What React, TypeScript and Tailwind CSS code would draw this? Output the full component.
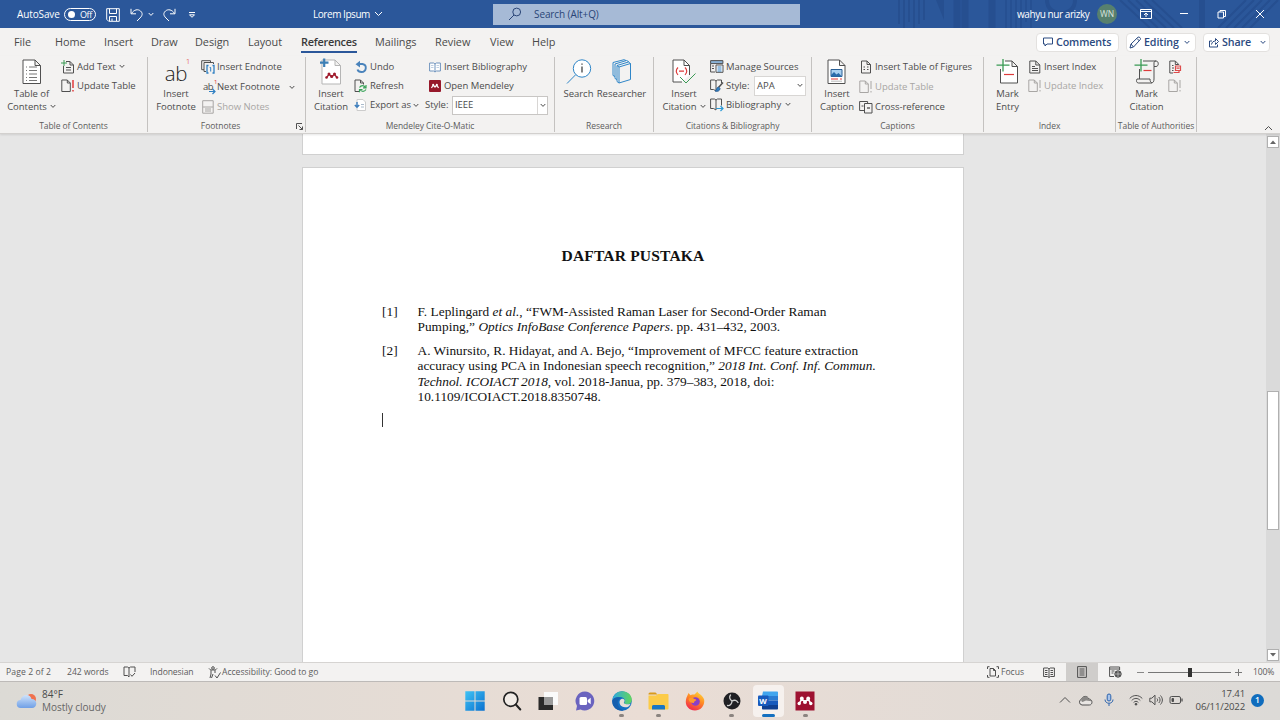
import type { ReactNode } from "react";
import { clsx } from "clsx";

type IconProps = { w: number; h: number; className?: string; children: ReactNode };

function Icon({ w, h, className, children }: IconProps) {
  return (
    <svg
      width={w}
      height={h}
      viewBox={`0 0 ${w} ${h}`}
      fill="none"
      stroke="#505050"
      strokeWidth="1"
      className={clsx("shrink-0", className)}
    >
      {children}
    </svg>
  );
}

function Chevron({ className }: { className?: string }) {
  return (
    <svg width="6" height="5" viewBox="0 0 6 5" fill="none" stroke="currentColor" className={clsx("shrink-0", className)}>
      <path d="M0.7 1 3 3.4 5.3 1" />
    </svg>
  );
}

/* ---------- title bar ---------- */

function TitleBar() {
  return (
    <header className="relative flex h-7 shrink-0 items-center overflow-hidden bg-[#2b579a] text-white">
      <svg className="absolute top-0 right-0" width="400" height="28" viewBox="0 0 400 28" fill="none" stroke="#264f90">
        <path d="M19 0v24M24 0v28M29 0v22M34 0v28M39 0v24M44 0v20" strokeWidth="2" />
        <path d="M56 0h8v20z" fill="#264f90" stroke="none" />
        <path d="M77 0v28M85 0v28M112 0v28" strokeWidth="7" />
        <path d="M126 0v28M131 0v28M136 0v28M141 0v28M146 0v22M151 0v28" strokeWidth="1.5" />
        <path d="M167 0c0 18 28 18 28 0" strokeWidth="4" />
        <path d="M240 0l30 28M248 0l30 28M256 0l30 28M264 0l30 28M272 0l30 28" strokeWidth="2" />
        <path d="M322 0v28" strokeWidth="6" />
        <path d="M366 0l-28 28M374 0l-28 28M382 0l-28 28M390 0l-28 28M398 0l-28 28" strokeWidth="2" />
      </svg>
      <div className="relative flex w-full items-center">
        <span className="ml-[17px] w-[47px] text-[10px] tracking-[-0.12px]">AutoSave</span>
        <span className="flex h-[13px] w-8 items-center rounded-full border border-white pl-[3px]">
          <span className="size-[7px] rounded-full bg-white" />
          <span className="ml-[5px] text-[9px] leading-none tracking-[-0.4px]">Off</span>
        </span>
        <Icon w={14} h={14} className="mt-px ml-[10px] stroke-white">
          <path d="M.7.7h12.600v12.600H2.700l-2-2zM3.500.7v4.800h7V.7M3.500 13V8.500h7V13M6 13v-2.500" />
        </Icon>
        <Icon w={14} h={14} className="mt-px ml-[10px] stroke-white">
          <path d="M1 .8v5h5M1.500 5.500C4 1.500 8 .8 10.500 3c2.500 2.300 2 4.500-.5 7L7 13" />
        </Icon>
        <Chevron className="ml-1" />
        <Icon w={14} h={14} className="mt-px ml-2 stroke-white">
          <path d="M13 .8v5H8M12.500 5.500C10 1.500 6 .8 3.500 3 1 5.300 1.500 7.500 4 10l3 3" />
        </Icon>
        <Icon w={8} h={8} className="mt-px ml-3 stroke-white">
          <path d="M1 1.500h6M1.500 3.800 4 6.300l2.500-2.500z" />
        </Icon>
        <span className="mt-px ml-[117px] w-[60px] text-[10px] tracking-[-0.45px] whitespace-nowrap">Lorem Ipsum</span>
        <Icon w={9} h={6} className="ml-px stroke-white">
          <path d="M1 1l3.500 3.500L8 1" />
        </Icon>
        <div className="ml-[110px] flex h-[21px] w-[307px] items-center bg-[#a6bad6] text-[#2a4577]">
          <Icon w={14} h={14} className="ml-[15px] stroke-[#2a4577]">
            <circle cx="8.700" cy="5" r="3.900" />
            <path d="M6 8 1 13" />
          </Icon>
          <span className="ml-3 text-[10px] tracking-[-0.1px] whitespace-nowrap">Search (Alt+Q)</span>
        </div>
        <span className="ml-[217px] w-[80px] text-[10px] tracking-[-0.43px] whitespace-nowrap">
          wahyu nur arizky
        </span>
        <span className="flex size-5 items-center justify-center rounded-full bg-[#57806e] text-[8.500px] text-[#d8e4de]">WN</span>
        <Icon w={12} h={10} className="ml-[23px] stroke-white">
          <path d="M.5.5h11v9H.5zM.5 2.500h11M6 8V4.200M4 6l2-2 2 2" />
        </Icon>
        <Icon w={10} h={10} className="ml-[27px] stroke-white">
          <path d="M1 4.500h8" />
        </Icon>
        <Icon w={10} h={10} className="ml-7 stroke-white">
          <path d="M1 3h5.500v6H1zM3 3V1.500h5.500V7.500H6.500" strokeLinejoin="round" />
        </Icon>
        <Icon w={10} h={10} className="ml-7 stroke-white">
          <path d="M1 1l8 8M9 1 1 9" />
        </Icon>
      </div>
    </header>
  );
}

/* ---------- tabs ---------- */

const tabs = [
  { label: "File", cls: "w-[41px]" },
  { label: "Home", cls: "w-[49px]" },
  { label: "Insert", cls: "w-[47px]" },
  { label: "Draw", cls: "w-[44px]" },
  { label: "Design", cls: "w-[53px]" },
  { label: "Layout", cls: "w-[53px]" },
  { label: "References", cls: "w-[74px]", active: true },
  { label: "Mailings", cls: "w-[60px]" },
  { label: "Review", cls: "w-[55px]" },
  { label: "View", cls: "w-[42px]" },
  { label: "Help", cls: "w-[40px]" },
];

function Tabs() {
  return (
    <nav className="flex h-7 shrink-0 items-center bg-[#f3f2f1] pl-[14px] text-[10.900px] tracking-[-0.05px] text-[#4a4a4a]">
      {tabs.map((tab) => (
        <div key={tab.label} className={clsx("shrink-0", tab.cls)}>
          <span
            className={clsx(
              "relative inline-block leading-5",
              tab.active && "font-semibold tracking-[-0.25px] text-[#3a3a3a]"
            )}
          >
            {tab.label}
            {tab.active && <span className="absolute inset-x-0 -bottom-px h-0.5 bg-[#2b579a]" />}
          </span>
        </div>
      ))}
      <div className="ml-auto flex items-center pr-[10px] text-[10.700px] font-semibold tracking-[-0.1px] text-[#2b4a80]">
        <button className="flex h-[19px] w-[83px] items-center rounded-sm border border-[#e3e1df] bg-white pl-1.5">
          <Icon w={10} h={10} className="stroke-[#2b4a80]">
            <path d="M.5 1h9v6H4L2 9V7H.5z" />
          </Icon>
          <span className="ml-[3px]">Comments</span>
        </button>
        <button className="ml-[7px] flex h-[19px] w-[70px] items-center rounded-sm border border-[#e3e1df] bg-white pl-0.5">
          <Icon w={13} h={13} className="stroke-[#2b4a80]">
            <path d="M1 12l1-4L9 1.200c1-.8 3.300 1 2.300 2.300L4.500 11zM8 2.500 10.500 5M2 8l2.500 3" />
          </Icon>
          <span className="ml-[2px]">Editing</span>
          <Chevron className="ml-[5px]" />
        </button>
        <button className="ml-[7px] flex h-[19px] w-[67px] items-center rounded-sm border border-[#e3e1df] bg-white pl-[5px]">
          <Icon w={10} h={11} className="stroke-[#2b4a80]">
            <path d="M3 4H.5v6h8V7.500M2.500 7.500C3 5 4.500 4 6.500 4V1.500l3 3-3 3V5.500" />
          </Icon>
          <span className="ml-[3px]">Share</span>
          <Chevron className="ml-[9px]" />
        </button>
      </div>
    </nav>
  );
}

/* ---------- ribbon icons ---------- */

const icons = {
  toc: (
    <Icon w={20} h={26}>
      <path d="M1 1h12l5.500 5.500V24.500H1zM13 1v5.500h5.500" fill="#fff" />
      <path d="M4 8h1M7 8h8M4 11.500h1M7 11.500h8M4 15h1M7 15h8M4 18.500h1M7 18.500h8M4 21.500h1M7 21.500h8" stroke="#777" />
    </Icon>
  ),
  addText: (
    <Icon w={14} h={14}>
      <path d="M5 1.500h4l3.500 3.500v8h-10V6M9 1.500V5h3.500M5 7.500h5M5 10h5" />
      <path d="M3 0v6M0 3h6" stroke="#3a9a55" />
    </Icon>
  ),
  updateTable: (
    <Icon w={14} h={14}>
      <path d="M.8 1h5.500l3 3v8.500H.8zM6.300 1v3h3" />
      <path d="M12 1v8M12 11v1.500" stroke="#e03030" strokeWidth="1.400" />
    </Icon>
  ),
  updateOff: (
    <Icon w={14} h={14} className="stroke-[#a8a6a4]">
      <path d="M.8 1h5.500l3 3v8.500H.8zM6.300 1v3h3M12 1v8M12 11v1.500" />
    </Icon>
  ),
  endnote: (
    <Icon w={14} h={14}>
      <path d="M9.500 2.500V.7H.7v9H3M5 11.500H3v-9h9.500V4" />
      <path d="M7.500 5.500H6v7.500h1.500M11.500 5.500H13v7.500h-1.500" stroke="#2e7fc2" strokeWidth="1.300" />
      <path d="M8.700 7.500h1v4" stroke="#2e7fc2" />
    </Icon>
  ),
  notes: (
    <Icon w={12} h={14} className="stroke-[#a8a6a4]">
      <path d="M.7.7h10.500v12.500H.7zM.7 7h10.500M3 9h6M3 11h6" />
    </Icon>
  ),
  mendeleyInsert: (
    <Icon w={24} h={28}>
      <path d="M3 2h13l5.500 5.500V26H3zM16 2v5.500h5.500" fill="#fff" stroke="#b5b5b5" />
      <path d="M5.200 .5v8.500M1 4.700h8.500" stroke="#3d7fb5" strokeWidth="2.200" />
      <g fill="#a01a2c" stroke="none">
        <circle cx="10" cy="16" r="1.500" />
        <circle cx="15.500" cy="16" r="1.500" />
        <circle cx="7.500" cy="19.500" r="1.300" />
        <circle cx="12.700" cy="18.500" r="1.600" />
        <circle cx="18" cy="19.500" r="1.300" />
      </g>
      <path d="M7.500 19.500 10 16.500l2.700 2 2.800-2 2.500 3" stroke="#a01a2c" strokeWidth="1.300" />
    </Icon>
  ),
  undo: (
    <Icon w={14} h={14}>
      <path d="M4 4h4.500c5 1 4 8-1 8-2 0-3.500-.8-4-2.500" stroke="#4a83bb" strokeWidth="1.900" />
      <path d="M1.500 4.200 6 .8v6.700z" fill="#4a83bb" stroke="none" />
    </Icon>
  ),
  refresh: (
    <Icon w={14} h={14}>
      <path d="M5 12.500H1V1h5.500l3 3v1.500M6.500 1v3h3" />
      <path d="M5.500 8.500c1.500-2.500 4.500-2.500 6 0M12 6v2.800H9M12 10.500c-1.500 2.500-4.500 2.500-6 0M5.500 13.200v-2.700h3" stroke="#3aa35a" strokeWidth="1.200" />
    </Icon>
  ),
  exportAs: (
    <Icon w={14} h={14}>
      <path d="M3 1.500h6l2.500 2.500v8.500H3z" fill="#fff" stroke="#ccc" />
      <path d="M3 4v5M.8 7 3 9.300 5.200 7" stroke="#3b7dbd" strokeWidth="1.400" />
      <path d="M7 9h3M7 6.500h3" stroke="#abc" />
    </Icon>
  ),
  biblio: (
    <Icon w={12} h={12} className="stroke-[#6f93bd]">
      <path d="M.6 2h4L6 3l1.400-1h4v8h-4L6 11l-1.400-1h-4zM6 3v8" fill="#fff" />
      <path d="M2 4.500h2.500M2 6.500h2.500M7.500 4.500H10M7.500 6.500H10" stroke="#c0d0e2" />
    </Icon>
  ),
  openMendeley: (
    <Icon w={12} h={12}>
      <rect width="12" height="12" rx="1" fill="#97192b" stroke="none" />
      <path d="M2.500 8 4.200 5 6 7l1.800-2L9.500 8" stroke="#fff" strokeWidth="1.200" />
      <circle cx="4.200" cy="4.700" r="1" fill="#fff" stroke="none" />
      <circle cx="7.800" cy="4.700" r="1" fill="#fff" stroke="none" />
    </Icon>
  ),
  search: (
    <Icon w={26} h={26} className="stroke-[#2f86c8]">
      <circle cx="16" cy="9.500" r="8.700" fill="#fff" />
      <path d="M9.700 15.700 1 24.500" />
      <path d="M16 7.500v6M16 4.500v1.300" stroke="#333" strokeWidth="1.200" />
    </Icon>
  ),
  researcher: (
    <Icon w={22} h={26} className="stroke-[#2f86c8]">
      <path d="M8 8v16l11.500-3.500V4.500zM8 24l-2-1.500V6.500L17.500 3l2 1.500M6 6.500 8 8M6 20.500l-2-1V5l11.500-3.500 2 1V3M4 17.500l-2-1V3.500L13 .7l2 .8" />
    </Icon>
  ),
  citation: (
    <Icon w={24} h={28}>
      <path d="M17.500 18v-9.500L12 3H1v22h9M12 3v5.500h5.500" fill="#fff" />
      <path d="M6 10.500c-2.300 2.300-2.300 5 0 7.300M13 10.500c2.300 2.300 2.300 5 0 7.300M7 14.200h5" stroke="#dd3b3b" strokeWidth="1.200" />
      <path d="M8 20l6 6 9.500-9.500" stroke="#3a9a55" />
    </Icon>
  ),
  manage: (
    <Icon w={14} h={13}>
      <path d="M.6.6h12.300v3H.6z" fill="#8bb2d6" />
      <path d="M.6 3.500v8.500H5M2 6h2M2 8.500h2" />
      <path d="M6 5h7v7.300H6z" fill="#fff" />
      <path d="M7.500 7h4M7.500 9h4M7.500 11h4" stroke="#2e7fc2" />
    </Icon>
  ),
  styleBook: (
    <Icon w={14} h={14}>
      <path d="M6 2 4.500 1H.6v9.500h3L6 12V2l1.500-1h4v3" />
      <path d="M13 3.500 8.500 8.500" strokeWidth="1.500" />
      <path d="M8.500 8c-2 0-1.500 3-3.500 4 3 1 5-.5 5-2.500z" fill="#2e7fc2" stroke="#2e5f92" />
    </Icon>
  ),
  biblioArrow: (
    <Icon w={14} h={14}>
      <path d="M6 2 4.500 1H.6v9.500h3L6 12V2l1.500-1h4v6.500" />
      <path d="M6 10.500h7M10.500 8l2.500 2.500-2.500 2.500" stroke="#2e9bd6" strokeWidth="1.200" />
    </Icon>
  ),
  caption: (
    <Icon w={20} h={26}>
      <path d="M1 1h11.500l5.500 5.500V24.500H1zM12.500 1v5.500H18" fill="#fff" />
      <path d="M4 10.500h11v7H4z" fill="#a9d0f0" stroke="#2b5f94" />
      <path d="M4 16l3-3 2.500 2.500 2-1.500 3.500 3.500H4z" fill="#2b6cab" stroke="none" />
      <path d="M4 20h7M13 20h2" stroke="#dd3b3b" />
      <path d="M4 22.200h11" stroke="#bbb" />
    </Icon>
  ),
  figures: (
    <Icon w={14} h={14}>
      <path d="M2.500 1h5.500l3.500 3.500V13h-9zM8 1v3.500h3.500" />
      <path d="M4.500 7h1.500M8 7h1.500M4.500 9.500h1.500M8 9.500h1.500" />
    </Icon>
  ),
  crossRef: (
    <Icon w={14} h={14}>
      <path d="M5 10.500H.6V1.500h8v2M2.500 6h2" />
      <path d="M5.500 3.500h7.500v9.500H5.500z" fill="#f3f2f1" />
      <path d="M8 8h3" stroke="#555" strokeWidth="1.400" />
    </Icon>
  ),
  markEntry: (
    <Icon w={24} h={28}>
      <path d="M9 3h7l5.500 5.500V25H4.500V11M16 3v5.500h5.500" fill="#fff" />
      <path d="M7 1v12.500M.5 7.200h13" stroke="#3a9a55" strokeWidth="1.300" />
      <path d="M8 16.500h10" stroke="#dd3b3b" strokeWidth="1.200" />
    </Icon>
  ),
  insertIndex: (
    <Icon w={12} h={14}>
      <path d="M.8 1h6l4 4v8H.8zM6.800 1v4h4M3 6.500h3M3 8.500h6M3 10.500h6" />
    </Icon>
  ),
  markCitation: (
    <Icon w={26} h={28}>
      <path d="M9 3h13c3 0 3 5.500 0 5.500h-2V21c0 5-4 5-4 0H3c-1 1.800-.5 4 1.500 4H18M5.500 11v10M20 8.500V5c0-1 .5-2 2-2" fill="none" />
      <path d="M7 1v12.500M.5 7.200h13" stroke="#3a9a55" strokeWidth="1.300" />
      <path d="M9.500 12.500h8" stroke="#dd3b3b" strokeWidth="1.200" />
    </Icon>
  ),
  authorities: (
    <Icon w={13} h={14}>
      <path d="M4 13H.8V1h5.500l3.500 3.500M6.300 1v3.500h3.500M3 5.500h1.500M3 8h2M3 10.500h1.500" />
      <path d="M6.500 6h5v4.500h-5zM4.500 12.500h5.500v-2M7.500 8.200h3" stroke="#dd4b4b" strokeWidth="1.200" />
    </Icon>
  ),
};

/* ---------- ribbon ---------- */

function Group({ label, cls, labelCls, children }: { label: string; cls: string; labelCls?: string; children: ReactNode }) {
  return (
    <section className={clsx("my-px flex shrink-0 flex-col border-r border-[#c4c2c0]", cls)}>
      <div className="flex h-[64px] items-start">{children}</div>
      <div className={clsx("text-center text-[8.500px] leading-[12px] tracking-[-0.06px] whitespace-nowrap text-[#5c5c5c]", labelCls)}>
        {label}
      </div>
    </section>
  );
}

function Big({ icon, cls, lines, chevron }: { icon: ReactNode; cls: string; lines: string[]; chevron?: boolean }) {
  return (
    <div className={clsx("flex shrink-0 flex-col items-center", cls)}>
      <div className="flex h-[30px] items-start justify-center">{icon}</div>
      {lines.map((line, i) => (
        <span key={line} className="flex items-center leading-[13px] whitespace-nowrap">
          {line}
          {chevron && i === lines.length - 1 && <Chevron className="ml-[3px]" />}
        </span>
      ))}
    </div>
  );
}

function Row({ icon, label, tall, off, chevron, gap = "ml-0.5" }: { icon: ReactNode; label?: string; tall?: boolean; off?: boolean; chevron?: string; gap?: string }) {
  return (
    <div className={clsx("flex items-center whitespace-nowrap", tall ? "h-5" : "h-[19.300px]", off && "text-[#a8a6a4]")}>
      <span className="flex w-[14px] justify-center">{icon}</span>
      {label && <span className={gap}>{label}</span>}
      {chevron && <Chevron className={chevron} />}
    </div>
  );
}

function AbIcon({ small }: { small?: boolean }) {
  if (small) {
    return (
      <span className="relative text-[9.500px] leading-none tracking-[-0.5px]">
        ab
        <Icon w={7} h={7} className="absolute top-1.5 left-[6px] stroke-[#2e7fc2]">
          <path d="M0 3.500h6M3.500 1 6 3.500 3.500 6" strokeWidth="1.200" />
        </Icon>
        <span className="absolute -top-[3px] left-[11px] text-[6px] text-[#e03030]">1</span>
      </span>
    );
  }
  return (
    <span className="relative mt-[5px] text-[20.500px] leading-[22px] font-light tracking-[-0.4px] text-[#222]">
      ab
      <span className="absolute -top-[7px] left-[21px] text-[8px] leading-[12px] text-[#e03030]">1</span>
    </span>
  );
}

function Ribbon() {
  return (
    <div className="relative z-10 flex h-[78px] shrink-0 border-b border-[#d2d0ce] bg-[#f3f2f1] text-[9.500px] tracking-[-0.04px] text-[#4c4c4c] shadow-[0_1px_2px_rgba(0,0,0,0.1)]">
      <Group label="Table of Contents" cls="w-[148px]">
        <Big icon={<span className="mt-0.5">{icons.toc}</span>} cls="ml-[6px] w-[51px]" lines={["Table of", "Contents"]} chevron />
        <div className="ml-[4px]">
          <Row icon={icons.addText} label="Add Text" chevron="ml-[3px]" />
          <Row icon={icons.updateTable} label="Update Table" />
        </div>
      </Group>

      <Group label="Footnotes" cls="w-[158px]" labelCls="relative pr-3">
        <Big icon={<AbIcon />} cls="ml-[6px] w-[44px]" lines={["Insert", "Footnote"]} />
        <div className="ml-[3px]">
          <Row tall icon={icons.endnote} label="Insert Endnote" />
          <Row tall icon={<AbIcon small />} label="Next Footnote" chevron="ml-[9px]" />
          <Row tall off icon={icons.notes} label="Show Notes" />
        </div>
        <Icon w={7} h={7} className="absolute top-[67px] left-[296px]">
          <path d="M6 .5H.5V6M2.500 2.500l4 4M6.500 3.500v3h-3" />
        </Icon>
      </Group>

      <Group label="Mendeley Cite-O-Matic" cls="w-[249px]">
        <Big icon={<span className="mt-px">{icons.mendeleyInsert}</span>} cls="ml-[7px] w-[36px]" lines={["Insert", "Citation"]} />
        <div className="ml-[5px] w-[73px]">
          <Row icon={icons.undo} label="Undo" />
          <Row icon={icons.refresh} label="Refresh" />
          <Row icon={icons.exportAs} label="Export as" chevron="ml-[2px]" />
        </div>
        <div className="pl-px">
          <Row icon={icons.biblio} label="Insert Bibliography" />
          <Row icon={icons.openMendeley} label="Open Mendeley" />
          <div className="-ml-[3px] flex h-[19px] items-center">
            <span className="w-[27px]">Style:</span>
            <div className="flex h-[19px] w-[96px] items-center border border-[#c8c6c4] bg-white pl-0.5">
              <span className="flex-1">IEEE</span>
              <span className="flex h-full w-[10px] items-center justify-center border-l border-[#d8d6d4]">
                <Chevron />
              </span>
            </div>
          </div>
        </div>
      </Group>

      <Group label="Research" cls="w-[99px]">
        <Big icon={<span className="mt-0.5">{icons.search}</span>} cls="ml-[8px] w-[31px]" lines={["Search"]} />
        <Big icon={<span className="mt-0.5">{icons.researcher}</span>} cls="ml-[2px] w-[51px]" lines={["Researcher"]} />
      </Group>

      <Group label="Citations & Bibliography" cls="w-[158px]">
        <Big icon={icons.citation} cls="ml-[7px] w-[46px]" lines={["Insert", "Citation"]} chevron />
        <div className="ml-[3px]">
          <Row icon={icons.manage} label="Manage Sources" />
          <div className="flex h-[19px] items-center">
            {icons.styleBook}
            <span className="ml-0.5 w-[28px]">Style:</span>
            <div className="flex h-5 w-[52px] items-center justify-between border border-[#d8d6d4] bg-white px-0.5">
              <span>APA</span>
              <Chevron />
            </div>
          </div>
          <Row icon={icons.biblioArrow} label="Bibliography" chevron="ml-[4px]" />
        </div>
      </Group>

      <Group label="Captions" cls="w-[172px]">
        <Big icon={<span className="mt-0.5">{icons.caption}</span>} cls="ml-[6px] w-[38px]" lines={["Insert", "Caption"]} />
        <div className="ml-[3px]">
          <Row tall icon={icons.figures} label="Insert Table of Figures" />
          <Row tall off icon={icons.updateOff} label="Update Table" />
          <Row tall icon={icons.crossRef} label="Cross-reference" />
        </div>
      </Group>

      <Group label="Index" cls="w-[132px]">
        <Big icon={<span className="mt-px">{icons.markEntry}</span>} cls="ml-[6px] w-[35px]" lines={["Mark", "Entry"]} />
        <div className="ml-[3px]">
          <Row icon={icons.insertIndex} label="Insert Index" />
          <Row off icon={icons.updateOff} label="Update Index" />
        </div>
      </Group>

      <Group label="Table of Authorities" cls="w-[81px]">
        <Big icon={<span className="mt-px">{icons.markCitation}</span>} cls="ml-[12px] w-[37px]" lines={["Mark", "Citation"]} />
        <div className="ml-[3px]">
          <Row icon={icons.authorities} />
          <Row icon={icons.updateOff} />
        </div>
      </Group>

      <Icon w={9} h={6} className="mt-auto mr-[7px] mb-[2px] ml-auto">
        <path d="M1 5l3.500-3.500L8 5" />
      </Icon>
    </div>
  );
}

/* ---------- document ---------- */

function Reference({ n, children }: { n: number; children: ReactNode }) {
  return (
    <div className="mb-[8.500px] flex">
      <span className="w-[35.500px] shrink-0">[{n}]</span>
      <p className="whitespace-nowrap">{children}</p>
    </div>
  );
}

function ScrollButton({ up }: { up?: boolean }) {
  return (
    <span className="flex h-3 w-3 items-center justify-center border border-[#b0b0b0] bg-white">
      <svg width="6" height="4" viewBox="0 0 6 4" fill="#666">
        <path d={up ? "M0 4 3 0.500 6 4z" : "M0 0 3 3.500 6 0z"} />
      </svg>
    </span>
  );
}

function DocumentArea() {
  return (
    <main className="flex h-[528px] shrink-0 bg-[#e6e6e6]">
      <div className="flex min-w-0 flex-1 flex-col pl-[302px]">
        <div className="h-[21px] w-[662px] shrink-0 border border-t-0 border-[#d0d0d0] bg-white" />
        <div className="mt-3 w-[662px] flex-1 border border-b-0 border-[#d0d0d0] bg-white px-[79px] font-['Liberation_Serif',serif] text-[13.330px] leading-[15.300px] tracking-[0.018px] text-[#111]">
          <h1 className="mt-[79px] text-center text-[15.550px] leading-[18px] font-bold tracking-[0.16px]">DAFTAR PUSTAKA</h1>
          <div className="mt-[39px]">
            <Reference n={1}>
              F. Leplingard <i>et al.</i>, “FWM-Assisted Raman Laser for Second-Order Raman
              <br />
              Pumping,” <i>Optics InfoBase Conference Papers</i>. pp. 431–432, 2003.
            </Reference>
            <Reference n={2}>
              A. Winursito, R. Hidayat, and A. Bejo, “Improvement of MFCC feature extraction
              <br />
              accuracy using PCA in Indonesian speech recognition,” <i>2018 Int. Conf. Inf. Commun.</i>
              <br />
              <i>Technol. ICOIACT 2018</i>, vol. 2018-Janua, pp. 379–383, 2018, doi:
              <br />
              10.1109/ICOIACT.2018.8350748.
            </Reference>
          </div>
          <div className="h-[14px] w-px bg-[#333]" />
        </div>
      </div>
      <div className="flex w-[14px] flex-col items-center bg-[#dadada] pt-[2px] pb-[1px]">
        <ScrollButton up />
        <span className="mt-[243px] mb-auto h-[139px] w-3 border border-[#b0b0b0] bg-white" />
        <ScrollButton />
      </div>
    </main>
  );
}

/* ---------- status bar ---------- */

function StatusBar() {
  return (
    <footer className="flex h-[19px] shrink-0 items-center border-t border-[#d6d4d2] bg-[#f3f2f1] text-[8.600px] tracking-[-0.02px] whitespace-nowrap text-[#5c5c5c]">
      <span className="ml-[6px] w-[61px] tracking-[0.1px]">Page 2 of 2</span>
      <span className="w-[56px]">242 words</span>
      <Icon w={13} h={12}>
        <path d="M6 2 4.500 1H1v8.500h3.500L6 11V2l1.500-1H12v5M7.500 8.500l1.500 1.800L12 7" />
      </Icon>
      <span className="ml-[14px] w-[58px] tracking-[-0.1px]">Indonesian</span>
      <Icon w={13} h={13}>
        <circle cx="5" cy="2" r="1.300" />
        <path d="M1 2.500c1 2 7 2 8 0M3 4v4l-1 4M7 4v3M3.500 12l1.500-4M7 9.500 9 12l3.500-5.500" />
      </Icon>
      <span className="ml-px">Accessibility: Good to go</span>
      <div className="ml-auto flex h-full items-center">
        <Icon w={12} h={12}>
          <path d="M.5 3V.7H2.500M9.500.7h2V3M.5 9v2.300h2M9.500 11.300h2V9M3 2.500h3.500l2 2v5.500H3zM6.500 2.500v2h2" />
        </Icon>
        <span className="ml-[2px] w-[42px]">Focus</span>
        <Icon w={12} h={11}>
          <path d="M6 2 4.800 1H.6v8.500h4L6 10.500V2l1.200-1h4.200v8.500h-4L6 10.500M2 3.500h2.500M2 5.500h2.500M2 7.500h2.500M7.500 3.500H10M7.500 5.500H10M7.500 7.500H10" />
        </Icon>
        <span className="ml-[11px] flex h-full w-8 items-center justify-center bg-[#cfcdcb]">
          <Icon w={10} h={12}>
            <path d="M.6.6h8.800v10.800H.6zM2.500 3h5M2.500 5h5M2.500 7h5M2.500 9h5" />
          </Icon>
        </span>
        <Icon w={13} h={12} className="ml-[11px]">
          <path d="M5 10.500H.6V1h10v3M.6 3h10M2.500 5h3M2.500 7h2" />
          <circle cx="9" cy="8" r="3.200" fill="#555" />
          <path d="M6 8h6M9 5v6" stroke="#ddd" strokeWidth=".6" />
        </Icon>
        <span className="ml-[15px] h-px w-[7px] bg-[#888]" />
        <span className="relative ml-[4px] h-px w-[83px] bg-[#777]">
          <span className="absolute -top-1 left-[40px] h-[9px] w-[4px] bg-[#333]" />
        </span>
        <Icon w={7} h={7} className="ml-[4px] stroke-[#777]">
          <path d="M0 3.500h7M3.500 0v7" />
        </Icon>
        <span className="ml-[11px] w-[27px] tracking-[-0.15px]">100%</span>
      </div>
    </footer>
  );
}

/* ---------- taskbar ---------- */

function MendeleyApp() {
  return (
    <svg width="20" height="20" viewBox="0 0 20 20" fill="none">
      <rect x=".5" y=".5" width="19" height="19" fill="#9d1231" />
      <path d="M4.200 12.500 6.800 8 10 10.500 13.200 8l2.600 4.500" stroke="#fff" strokeWidth="1.500" />
      <g fill="#fff">
        <circle cx="6.800" cy="7.500" r="1.900" />
        <circle cx="13.200" cy="7.500" r="1.900" />
        <circle cx="4.200" cy="12.500" r="1.700" />
        <circle cx="10" cy="11" r="2" />
        <circle cx="15.800" cy="12.500" r="1.700" />
      </g>
    </svg>
  );
}

const apps: { id: string; running?: boolean; active?: boolean; icon: ReactNode }[] = [
  {
    id: "start",
    icon: (
      <svg width="20" height="20" viewBox="0 0 20 20" fill="url(#win)">
        <defs>
          <linearGradient id="win" gradientUnits="userSpaceOnUse" x1="0" y1="0" x2="20" y2="20">
            <stop stopColor="#3fc4f5" />
            <stop offset="1" stopColor="#0a6fcf" />
          </linearGradient>
        </defs>
        <path d="M.3.3h9.200v9.200H.3zM10.500.3h9.200v9.200h-9.200zM.3 10.500h9.200v9.200H.3zM10.500 10.500h9.200v9.200h-9.200z" />
      </svg>
    ),
  },
  {
    id: "search",
    icon: (
      <svg width="20" height="20" viewBox="0 0 20 20" fill="none" stroke="#222" strokeWidth="1.700" strokeLinecap="round">
        <circle cx="8.800" cy="8.300" r="7" fill="#f1ebe6" />
        <path d="M13.800 13.500l4.500 5" strokeWidth="2" />
      </svg>
    ),
  },
  {
    id: "tasks",
    icon: (
      <svg width="20" height="20" viewBox="0 0 20 20">
        <rect x="6" y="1" width="14" height="13" fill="#fafafa" />
        <rect x=".5" y="6" width="14.500" height="13" fill="#2a2a2a" />
        <rect x="6" y="6" width="9" height="8" fill="#9a9a9a" />
      </svg>
    ),
  },
  {
    id: "chat",
    icon: (
      <svg width="20" height="20" viewBox="0 0 20 20">
        <path d="M10 .5a9.500 9.500 0 1 1-4.500 18L1 19.500l1-4.500A9.500 9.500 0 0 1 10 .5z" fill="#6a63bf" />
        <rect x="4.500" y="6" width="7.500" height="8" rx="1.500" fill="#fff" />
        <path d="M12.700 9l3-2.300v6.600l-3-2.300z" fill="#fff" />
      </svg>
    ),
  },
  {
    id: "edge",
    running: true,
    icon: (
      <svg width="20" height="20" viewBox="0 0 20 20">
        <defs>
          <linearGradient id="edgeTop" x1="0" x2="1">
            <stop stopColor="#2ea8e0" />
            <stop offset="1" stopColor="#62d65c" />
          </linearGradient>
        </defs>
        <circle cx="10" cy="10" r="9.800" fill="#1470c4" />
        <path d="M.3 9C1.500 3.500 5.500.2 10.300.2 15.500.2 19.800 4 19.800 8.700c0 3-2.400 4.600-5 4.600-2 0-3-.8-2.500-1.600C14 8.500 11.500 6 8 6 4 6 1.200 7.500.3 9z" fill="url(#edgeTop)" />
        <path d="M7.500 11c0-2 1.300-3.300 3-3.300 1.400 0 2.300 1.100 2.100 2.300-.5 1-1 1.500-.5 2.200.8 1.300 4 1.600 6.600.5-1.200 2.500-3.200 3.800-5.700 3.600C9.700 16 7.500 14 7.500 11z" fill="#e9dfd8" />
        <path d="M.3 9.500C2 5.500 7 5.500 9 7.500c-3 .5-4 3.500-3 6.500.8 2.500 3 4.800 6 5.500C5.500 20.500-.3 16 .3 9.500z" fill="#155fae" />
      </svg>
    ),
  },
  {
    id: "files",
    running: true,
    icon: (
      <svg width="21" height="20" viewBox="0 0 21 20">
        <path d="M.5 3A1.500 1.500 0 0 1 2 1.500h5.500l2 2H.5z" fill="#d99a1a" />
        <path d="M.5 4.500H8L10 3h9.500c.6 0 1 .4 1 1v13.500c0 .6-.4 1-1 1h-18c-.6 0-1-.4-1-1z" fill="#fccb48" />
        <path d="M4 18.500V15.500c0-.6.4-1.500 1.500-1.500h10c1 0 1.500.9 1.500 1.500v3z" fill="#1a76c4" />
      </svg>
    ),
  },
  {
    id: "firefox",
    icon: (
      <svg width="20" height="20" viewBox="0 0 20 20">
        <defs>
          <linearGradient id="fox" x1=".8" y1="0" x2=".3" y2="1">
            <stop stopColor="#ffd83b" />
            <stop offset=".45" stopColor="#ff8a24" />
            <stop offset="1" stopColor="#f0264f" />
          </linearGradient>
        </defs>
        <path d="M2 5.500 3.500 2l2 2.300C7 3.500 8 3.500 9.500 3.500L12.500.5c0 2 5.500 3.500 6.600 8 1 5.500-3 11-9.100 11C4 19.500.5 15 .8 10.500 1 8 1.300 7 2 5.500z" fill="url(#fox)" />
        <circle cx="10.500" cy="10.500" r="4.300" fill="#8a3fc6" />
        <path d="M3.500 8c2-2 4-1 6 0 1.500.2 2 .8 1.500 1.500-1.500.5-2 1-2 2.500-3 0-5-1-5.500-4z" fill="#ff9a2b" />
      </svg>
    ),
  },
  {
    id: "obs",
    running: true,
    icon: (
      <svg width="18" height="18" viewBox="0 0 18 18" fill="none">
        <circle cx="9" cy="9" r="8.500" fill="#202024" />
        <path d="M9 9C6.500 7.500 6 5 7.500 3M9 9c2.500-1.500 5-.5 6 1.500M9 9c0 3-2 4.800-4.500 4.500" stroke="#cfcfcf" strokeWidth="1.300" strokeLinecap="round" />
      </svg>
    ),
  },
  {
    id: "word",
    running: true,
    active: true,
    icon: (
      <svg width="20" height="19" viewBox="0 0 20 19">
        <path d="M5 .5h14c.5 0 1 .4 1 1V5H4z" fill="#41a5ee" />
        <path d="M4 5h16v4.500H4z" fill="#2b7cd3" />
        <path d="M4 9.500h16V14H4z" fill="#185abd" />
        <path d="M4 14h16v3.500c0 .6-.5 1-1 1H5c-.5 0-1-.4-1-1z" fill="#103f91" />
        <rect x="0" y="4.500" width="10.500" height="10.500" rx="1" fill="#185abd" />
        <text x="1.200" y="12.700" fontSize="7.800" fontWeight="700" fill="#fff" fontFamily="Open Sans, sans-serif">W</text>
      </svg>
    ),
  },
  { id: "mendeley", running: true, icon: <MendeleyApp /> },
];

function Taskbar() {
  return (
    <div className="flex h-[39px] shrink-0 items-center border-t border-[#bdbab8] bg-linear-to-r from-[#dcdad5] via-[#eaddd5] to-[#dcdad7] text-[#4a4a4a]">
      <div className="flex w-[456.500px] items-center">
        <svg className="ml-4" width="21" height="16" viewBox="0 0 21 16">
          <defs>
            <linearGradient id="cloud" x1="0" y1="0" x2="0" y2="1">
              <stop stopColor="#cfe3fb" />
              <stop offset="1" stopColor="#6f9fe6" />
            </linearGradient>
          </defs>
          <circle cx="15" cy="6" r="5" fill="#f0714d" />
          <path d="M5 15a4 4 0 0 1-.5-8C5.500 3.500 8 2 10.500 2c3 0 4.500 2 5 4 3 0 4.800 2 4.800 4.500S18.500 15 16 15z" fill="url(#cloud)" />
        </svg>
        <div className="-mt-px ml-[5px] text-[10px] leading-[13px] tracking-[-0.02px]">
          <div>84°F</div>
          <div className="text-[#666]">Mostly cloudy</div>
        </div>
      </div>
      <div className="flex">
        {apps.map((app) => (
          <div key={app.id} className="flex w-[36.700px] justify-center">
            <div
              className={clsx(
                "relative flex h-8 w-[31px] items-center justify-center rounded pb-px",
                app.active && "bg-[#f6f1ee]"
              )}
            >
              {app.icon}
              {app.running && (
                <span
                  className={clsx(
                    "absolute bottom-0 h-[3px] rounded-full",
                    app.active ? "w-[13px] bg-[#1470c0]" : "w-[5px] bg-[#8b8480]"
                  )}
                />
              )}
            </div>
          </div>
        ))}
      </div>
      <div className="ml-auto flex items-center pr-4 pb-[2px]">
        <Icon w={12} h={8}>
          <path d="M1 6.500l5-5 5 5" />
        </Icon>
        <Icon w={15} h={11} className="ml-[7px]">
          <path d="M4 10a3 3 0 0 1-.5-5.800C5 .5 9.500.5 10.800 4c4 0 4.200 6 .5 6z" fill="#e9e6e3" />
          <path d="M3.500 4.200C5 .5 9.500.5 10.800 4c1.500 0 2.500 1 2.700 2.300L8 5.500 4.500 7C3 6.500 3 5 3.500 4.200z" fill="#8a8886" stroke="none" />
        </Icon>
        <Icon w={10} h={14} className="ml-[11px] stroke-[#2a62ad]">
          <rect x="3.200" y="1" width="3.600" height="7" rx="1.800" fill="#a9c4ea" />
          <path d="M1 6.500c0 5 8 5 8 0M5 10.500V13" />
        </Icon>
        <Icon w={14} h={12} className="ml-[15px]">
          <path d="M.7 4.500c3.500-4 9-4 12.600 0M2.700 6.500c2.500-2.800 6-2.800 8.600 0M4.600 8.500c1.500-1.600 3.300-1.600 4.800 0" />
          <circle cx="7" cy="10.200" r=".9" fill="#444" />
        </Icon>
        <Icon w={14} h={12} className="ml-1.5">
          <path d="M.8 4.200h2L6 1.200v9.600L2.800 7.800h-2zM8 4.500c.8 1 .8 2 0 3M9.800 3c1.700 2 1.700 4 0 6M11.500 1.500c2.500 3 2.500 6 0 9" />
        </Icon>
        <Icon w={14} h={10} className="ml-1.5">
          <rect x="1" y="1.500" width="10.500" height="7" rx="1.500" />
          <path d="M3 3.500h1.500v3H3z" fill="#444" />
          <path d="M13 3.500v3" strokeWidth="1.300" />
        </Icon>
        <div className="ml-[9px] w-[53px] text-right text-[9.600px] leading-[13px] tracking-[-0.15px] whitespace-nowrap">
          <div>17.41</div>
          <div>06/11/2022</div>
        </div>
        <span className="ml-[6px] flex size-[13px] items-center justify-center rounded-full bg-[#0f6cbd] text-[8.500px] font-semibold text-white">
          1
        </span>
      </div>
    </div>
  );
}

export default function App() {
  return (
    <div className="flex h-[720px] w-[1280px] flex-col overflow-hidden bg-[#e6e6e6] font-['Open_Sans','Noto_Sans',sans-serif]">
      <TitleBar />
      <Tabs />
      <Ribbon />
      <DocumentArea />
      <StatusBar />
      <Taskbar />
    </div>
  );
}
